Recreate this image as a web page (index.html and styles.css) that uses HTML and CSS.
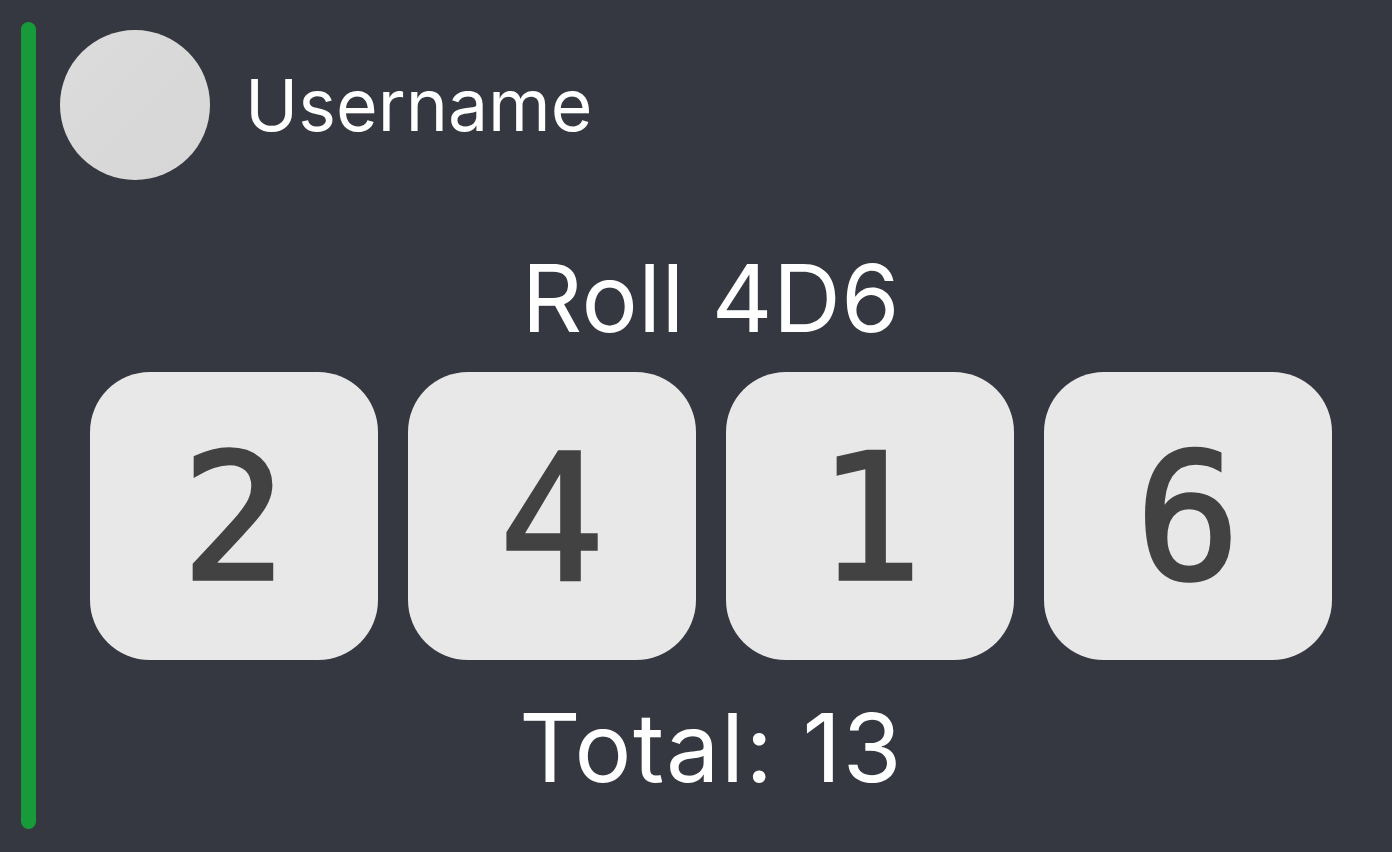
FILE: index.html
```html
<!DOCTYPE html>
<html>
<head>
<meta charset="utf-8">
<link rel="stylesheet" href="styles.css">
</head>
<body>
<div class="card">
  <div class="bar"></div>
  <div class="content">
    <div class="user">
      <div class="avatar"></div>
      <div class="name">Username</div>
    </div>
    <div class="title">Roll 4D6</div>
    <div class="dice">
      <div class="die">2</div>
      <div class="die">4</div>
      <div class="die">1</div>
      <div class="die">6</div>
    </div>
    <div class="total">Total: 13</div>
  </div>
</div>
</body>
</html>
```
FILE: styles.css
```css
html, body {
  margin: 0;
  padding: 0;
  background: #363841;
}
body {
  width: 1392px;
  height: 852px;
  overflow: hidden;
  font-family: Inter, "Noto Sans", sans-serif;
  color: #ffffff;
}
.card {
  display: flex;
  padding: 22px 0 23px 0;
  height: 852px;
  box-sizing: border-box;
}
.bar {
  width: 15px;
  margin-left: 21px;
  border-radius: 8px;
  background: #179a3a;
  flex: none;
}
.content {
  flex: 1;
  padding: 8px 30px 0 24px;
  display: flex;
  flex-direction: column;
}
.user {
  display: flex;
  align-items: center;
  gap: 35px;
}
.avatar {
  width: 150px;
  height: 150px;
  border-radius: 50%;
  background: linear-gradient(135deg, #dcdcdc, #d6d6d6);
  flex: none;
}
.name {
  font-size: 71.5px;
  line-height: 72px;
  font-weight: 400;
}
.title {
  margin-top: 71px;
  text-align: center;
  font-size: 94px;
  line-height: 94px;
  letter-spacing: 0.5px;
}
.dice {
  margin-top: 27px;
  display: flex;
  justify-content: center;
  gap: 30px;
}
.die {
  width: 288px;
  height: 288px;
  border-radius: 60px;
  background: #e8e8e8;
  color: #424242;
  display: flex;
  align-items: center;
  justify-content: center;
  font-family: "DejaVu Sans Mono", monospace;
  font-weight: 400;
  font-size: 174px;
  line-height: 174px;
  padding-top: 5px;
  box-sizing: border-box;
  -webkit-text-stroke: 3.5px #424242;
}
.total {
  margin-top: 41px;
  text-align: center;
  font-size: 95px;
  line-height: 94px;
  letter-spacing: 1.5px;
}
```
